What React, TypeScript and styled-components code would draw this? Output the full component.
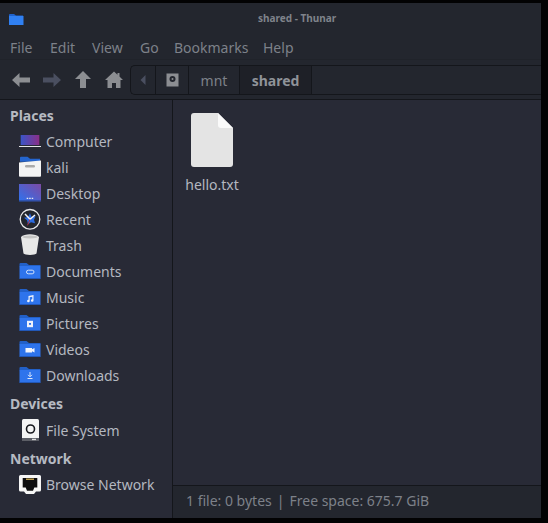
import React from "react";
import styled, { createGlobalStyle } from "styled-components";

const Global = createGlobalStyle`
  html, body { margin: 0; padding: 0; background: #000; }
  #root { width: 548px; height: 523px; overflow: hidden; }
`;

const Screen = styled.div`
  width: 548px;
  height: 523px;
  padding: 3px 7px 5px 0;
  box-sizing: border-box;
  background: #020203;
  font-family: "Noto Sans", sans-serif;
  font-size: 14px;
`;
const Win = styled.div`
  height: 100%;
  display: flex;
  flex-direction: column;
  background: #23262e;
  overflow: hidden;
`;
const TitleBar = styled.div`
  height: 33px;
  flex: none;
  display: flex;
  align-items: center;
  justify-content: space-between;
  padding: 0 0 0 9px;
`;
const Title = styled.div`
  width: 76px;
  margin-right: 207px;
  margin-top: -3px;
  white-space: nowrap;
  font-size: 10px;
  font-weight: 700;
  line-height: 15px;
  color: #7f838b;
`;
const MenuBar = styled.div`
  height: 24px;
  flex: none;
  box-sizing: border-box;
  display: flex;
  align-items: center;
  padding-left: 10px;
  border-bottom: 1px solid #20232a;
`;
const MenuItem = styled.span<{ $w: number }>`
  width: ${(p) => p.$w}px;
  flex: none;
  font-size: 14px;
  line-height: 20px;
  color: #7d8189;
`;
const ToolBar = styled.div`
  height: 40px;
  flex: none;
  box-sizing: border-box;
  display: flex;
  align-items: flex-start;
  padding: 5px 0 0 11px;
  border-bottom: 1px solid #14161b;
`;
const NavIcons = styled.div`
  display: flex;
  align-items: center;
  height: 30px;
  gap: 11px;
  width: 119px;
  flex: none;
`;
const PathBar = styled.div`
  flex: 1;
  height: 30px;
  box-sizing: border-box;
  display: flex;
  align-items: stretch;
  border: 1px solid #14161b;
  border-right: none;
  border-radius: 5px 0 0 5px;
`;
const PathSeg = styled.div<{ $w: number; $active?: boolean }>`
  width: ${(p) => p.$w}px;
  flex: none;
  box-sizing: border-box;
  display: flex;
  align-items: center;
  justify-content: center;
  border-right: 1px solid #14161b;
  background: ${(p) => (p.$active ? "#1e2027" : "transparent")};
  color: ${(p) => (p.$active ? "#8f9399" : "#7d8189")};
  font-weight: ${(p) => (p.$active ? 700 : 400)};
  font-size: 14px;
`;
const Body = styled.div`
  flex: 1;
  min-height: 0;
  display: flex;
  background: #282a36;
`;
const Sidebar = styled.div`
  width: 173px;
  flex: none;
  box-sizing: border-box;
  padding-top: 5px;
  border-right: 1px solid #14161b;
`;
const Section = styled.div`
  & + & { margin-top: 5px; }
`;
const Heading = styled.div`
  height: 23px;
  padding-left: 10px;
  font-size: 14px;
  font-weight: 700;
  line-height: 22px;
  color: #b6bac2;
`;
const Place = styled.div<{ $top?: number }>`
  height: 26px;
  display: flex;
  align-items: center;
  padding-left: 18px;
  gap: 4px;
  font-size: 14px;
  color: #b4b8c0;
  margin-top: ${(p) => p.$top ?? 0}px;
`;
const IconBox = styled.span`
  width: 24px;
  height: 22px;
  display: flex;
  flex: none;
`;
const Main = styled.div`
  flex: 1;
  display: flex;
  flex-direction: column;
  min-width: 0;
`;
const Content = styled.div`
  flex: 1;
  padding: 13px 0 0 12px;
`;
const FileItem = styled.div`
  width: 54px;
  display: flex;
  flex-direction: column;
  align-items: center;
  gap: 8px;
  font-size: 14px;
  line-height: 20px;
  color: #b4b8c0;
`;
const Status = styled.div`
  height: 33px;
  flex: none;
  box-sizing: border-box;
  display: flex;
  align-items: center;
  padding: 0 0 3px 13px;
  background: #23262e;
  border-top: 1px solid #14161b;
  font-size: 14px;
  color: #7d8189;
`;
const StatusSep = styled.span`
  margin: 0 5px;
`;

const Arrow = ({ d, color }: { d: string; color: string }) => (
  <svg width="20" height="20" viewBox="0 0 20 20"><path d={d} fill={color} /></svg>
);

const Icon = ({ children }: { children: React.ReactNode }) => (
  <svg width="24" height="22" viewBox="0 0 24 22">{children}</svg>
);

const Folder = ({ glyph }: { glyph?: React.ReactNode }) => (
  <Icon>
    <path d="M1.500 4a1 1 0 0 1 1-1h6l2.500 2h11.500v2H1.500z" fill="#2260c8" />
    <rect x="1.500" y="6" width="21" height="13" rx="1" fill="#2e74ec" />
    <rect x="1.500" y="18" width="21" height="1" fill="#2258b8" />
    {glyph}
  </Icon>
);

const icons: Record<string, React.ReactNode> = {
  Computer: (
    <Icon>
      <defs><linearGradient id="c" x1="0" x2="1"><stop offset="0" stopColor="#3a55c8" /><stop offset="1" stopColor="#8a2f88" /></linearGradient></defs>
      <rect x="2.700" y="5" width="18.600" height="10" fill="url(#c)" />
      <rect x="1" y="16" width="22" height="1" fill="#e4e4e8" />
    </Icon>
  ),
  kali: (
    <Icon>
      <path d="M2 1.700a1 1 0 0 1 1-1h6.500L12 2.700h10v3H2z" fill="#2465cf" />
      <path d="M1 6.500l22-2V19.700a1 1 0 0 1-1 1H2a1 1 0 0 1-1-1z" fill="#f4f4f4" />
      <rect x="7" y="9" width="10" height="2.500" rx="1.200" fill="#aaaaaa" />
    </Icon>
  ),
  Desktop: (
    <Icon>
      <defs><linearGradient id="d" x1="0" y1="1" x2="1" y2="0"><stop offset="0" stopColor="#2e72ee" /><stop offset="1" stopColor="#7d4aa4" /></linearGradient></defs>
      <rect x="1" y="2" width="22" height="17.300" fill="url(#d)" />
      <rect x="1" y="18.300" width="22" height="1" fill="#2a4a9c" />
      <path d="M8.700 15.800h1.500v1.200H8.700zM11.200 15.800h1.500v1.200h-1.500zM13.700 15.800h1.500v1.200h-1.500z" fill="#e8e8f0" />
    </Icon>
  ),
  Recent: (
    <Icon>
      <circle cx="12" cy="11.300" r="9.800" fill="#23262e" stroke="#e8e8ea" strokeWidth="1.300" />
      <path d="M12 5.300l1.500 3.500 4 -.5-1.500 3.500 1 3.500-4-1-3 2-1-4-3-2.500 4-.8z" fill="#2c6be0" />
      <path d="M7 6l5 5.300 5-4.300" stroke="#f0f0f4" strokeWidth="1.500" fill="none" />
      <path d="M12 11.300l-2.500 6" stroke="#b03040" strokeWidth="1" />
    </Icon>
  ),
  Trash: (
    <Icon>
      <path d="M3 3C6 -.7 18 -.7 21 3L18.500 19.500c-1 1.900-12 1.900-13 0z" fill="#e8e8e8" />
      <ellipse cx="12" cy="3" rx="7.800" ry="1.500" fill="#c4c4c4" />
    </Icon>
  ),
  Documents: <Folder glyph={<rect x="8.500" y="10.200" width="7.500" height="3.600" rx="1.800" fill="none" stroke="#cfe0fb" strokeWidth="1" />} />,
  Music: <Folder glyph={<path d="M10.500 10l5-1v5.500a1.300 1.300 0 1 1-1.200-1.300V10.800l-2.600.5v3.700a1.300 1.300 0 1 1-1.200-1.300z" fill="#eef2fb" />} />,
  Pictures: <Folder glyph={<g><rect x="9" y="8.800" width="6" height="6.400" fill="#eef2fb" /><rect x="11" y="11" width="2" height="1.800" fill="#2e74ec" /></g>} />,
  Videos: <Folder glyph={<path d="M7.500 10h6.500v1.200l2.500-1.200v4.500L14 13.300v1.200H7.500z" fill="#f2f5fc" />} />,
  Downloads: <Folder glyph={<path d="M12 8v4.500M10 10.800l2 2 2-2M9.500 14.500h5" stroke="#dbe6fb" strokeWidth="1" fill="none" />} />,
  "File System": (
    <Icon>
      <rect x="4" y="0" width="17" height="22" rx="1.500" fill="#f4f4f4" />
      <rect x="4" y="19" width="17" height="3" fill="#5c5e66" />
      <rect x="14" y="19.800" width="4" height="1.300" fill="#e0e0e0" />
      <circle cx="12.500" cy="10" r="4" fill="none" stroke="#16171c" strokeWidth="1.600" />
    </Icon>
  ),
  "Browse Network": (
    <Icon>
      <path d="M2.500 2h19A1.500 1.500 0 0 1 23 3.500V17a1.500 1.500 0 0 1-1.500 1.500H18L16 21H8l-2-2.500H2.500A1.500 1.500 0 0 1 1 17V3.500A1.500 1.500 0 0 1 2.500 2z" fill="#f6f6f6" />
      <path d="M4.700 5h14.600v9.500h-3L15 17.700H9l-1.300-3.200h-3z" fill="#0c0c0e" />
      <path d="M8 5.500h8V7H8z" fill="#b89a4a" />
    </Icon>
  ),
};

const Row = ({ name, top }: { name: string; top?: number }) => (
  <Place $top={top}><IconBox>{icons[name]}</IconBox>{name}</Place>
);

const menus: [string, number][] = [["File", 40], ["Edit", 42], ["View", 48], ["Go", 34], ["Bookmarks", 89], ["Help", 40]];

export default function App() {
  return (
    <>
      <Global />
      <Screen>
        <Win>
          <TitleBar>
            <svg width="15" height="11" viewBox="0 0 15 11">
              <path d="M0 1a1 1 0 0 1 1-1h4l2 1.500h7V3H0z" fill="#1f62cc" />
              <rect x="0" y="2" width="14.500" height="9" fill="#3080f2" />
            </svg>
            <Title>shared - Thunar</Title>
          </TitleBar>
          <MenuBar>
            {menus.map(([m, w]) => <MenuItem key={m} $w={w}>{m}</MenuItem>)}
          </MenuBar>
          <ToolBar>
            <NavIcons>
              <Arrow d="M1 10l7.500-7v4.500H19v5H8.500V17z" color="#8c8e92" />
              <Arrow d="M19 10l-7.500-7v4.500H1v5h10.500V17z" color="#4a4f60" />
              <Arrow d="M10 1l8 8h-5v9H7V9H2z" color="#8c8e92" />
              <Arrow d="M10 1.500l3.500 3.200V3h2v3.500L19 10h-2.500v8H12v-5H8v5H3.500v-8H1z" color="#8c8e92" />
            </NavIcons>
            <PathBar>
              <PathSeg $w={25}><svg width="6" height="10" viewBox="0 0 6 10"><path d="M5.500 0v10L.500 5z" fill="#4a4f60" /></svg></PathSeg>
              <PathSeg $w={33}>
                <svg width="13" height="14" viewBox="0 0 13 14">
                  <rect width="12" height="13" x="0.500" y="0.500" fill="#8c8e92" />
                  <circle cx="6.500" cy="6" r="3" fill="#23262e" />
                  <circle cx="6.500" cy="6" r="1" fill="#8c8e92" />
                </svg>
              </PathSeg>
              <PathSeg $w={51}>mnt</PathSeg>
              <PathSeg $w={72} $active>shared</PathSeg>
            </PathBar>
          </ToolBar>
          <Body>
            <Sidebar>
              <Section>
                <Heading>Places</Heading>
                {["Computer", "kali", "Desktop", "Recent", "Trash", "Documents", "Music", "Pictures", "Videos", "Downloads"].map((n) => <Row key={n} name={n} />)}
              </Section>
              <Section>
                <Heading>Devices</Heading>
                <Row name="File System" top={1} />
              </Section>
              <Section>
                <Heading>Network</Heading>
                <Row name="Browse Network" />
              </Section>
            </Sidebar>
            <Main>
              <Content>
                <FileItem>
                  <svg width="42" height="54" viewBox="0 0 42 54">
                    <path d="M3 0h24l15 15v36a3 3 0 0 1-3 3H3a3 3 0 0 1-3-3V3a3 3 0 0 1 3-3z" fill="#e4e4e4" />
                    <path d="M27 0l15 15H30a3 3 0 0 1-3-3z" fill="#fafafa" />
                  </svg>
                  hello.txt
                </FileItem>
              </Content>
              <Status>1 file: 0 bytes<StatusSep>|</StatusSep>Free space: 675.7 GiB</Status>
            </Main>
          </Body>
        </Win>
      </Screen>
    </>
  );
}
